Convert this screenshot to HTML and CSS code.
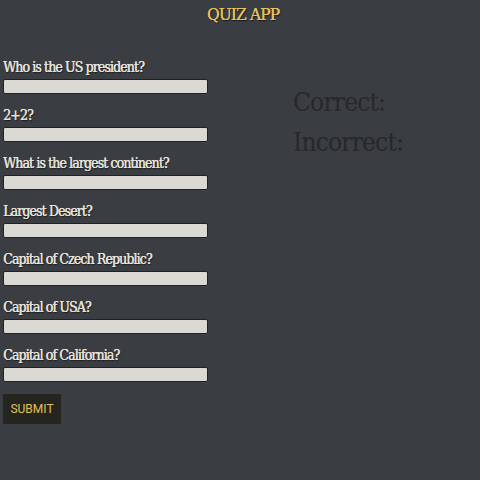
FILE: index.html
```
<!DOCTYPE html>
<html>
<head>
<meta charset="utf-8">
<link rel="stylesheet" href="styles.css">
</head>
<body>
<h1 class="title">QUIZ APP</h1>
<div class="main">
  <form class="quiz">
    <div class="item"><label class="q">Who is the US president?</label><input class="answer" type="text"></div>
    <div class="item"><label class="q">2+2?</label><input class="answer" type="text"></div>
    <div class="item"><label class="q">What is the largest continent?</label><input class="answer" type="text"></div>
    <div class="item"><label class="q">Largest Desert?</label><input class="answer" type="text"></div>
    <div class="item"><label class="q">Capital of Czech Republic?</label><input class="answer" type="text"></div>
    <div class="item"><label class="q">Capital of USA?</label><input class="answer" type="text"></div>
    <div class="item"><label class="q">Capital of California?</label><input class="answer" type="text"></div>
    <button class="submit" type="button">SUBMIT</button>
  </form>
  <div class="score">
    <div class="line">Correct:</div>
    <div class="line">Incorrect:</div>
  </div>
</div>
</body>
</html>
```
FILE: styles.css
```
html, body { margin: 0; padding: 0; }
body {
  background: #3a3d41;
  width: 480px;
  height: 480px;
  font-family: "Liberation Serif", serif;
  overflow: hidden;
}
.title {
  margin: 0;
  padding-top: 3px;
  text-align: center;
  font-family: "DejaVu Serif Condensed", "Liberation Serif", serif;
  font-size: 17px;
  font-weight: normal;
  letter-spacing: -0.8px;
  color: #e3c25c;
  text-shadow: 0.3px 0 0 #e3c25c, 1px 1px 1px #15171a;
  line-height: 22px;
  padding-left: 6px;
}
.main {
  display: flex;
  padding-left: 3px;
  margin-top: 33px;
}
.quiz {
  display: flex;
  flex-direction: column;
  width: 205px;
}
.item {
  display: flex;
  flex-direction: column;
  height: 48px;
}
.q {
  color: #e6e3de;
  font-family: "DejaVu Serif Condensed", "Liberation Serif", serif;
  font-size: 14px;
  font-weight: normal;
  letter-spacing: -0.9px;
  line-height: 18px;
  text-shadow: 0.4px 0 0 #e6e3de, 1px 1px 1px #1a1c1f;
}
.answer {
  margin: 3px 0 0 0;
  box-sizing: border-box;
  width: 205px;
  height: 15px;
  background: #dcd9d4;
  border: 1px solid #1e2126;
  border-radius: 2px;
  padding: 0;
}
.submit {
  margin-top: 0;
  align-self: flex-start;
  width: 58px;
  height: 30px;
  background: #24251f;
  border: none;
  color: #e0c15a;
  font-family: Roboto, "Liberation Sans", sans-serif;
  font-size: 12px;
  padding: 0;
}
.score {
  margin-left: 85px;
  margin-top: 24px;
  color: #26282a;
  font-family: "DejaVu Serif Condensed", "Liberation Serif", serif;
  font-size: 26px;
  letter-spacing: -0.8px;
  font-weight: 300;
  line-height: 40px;
}
```
